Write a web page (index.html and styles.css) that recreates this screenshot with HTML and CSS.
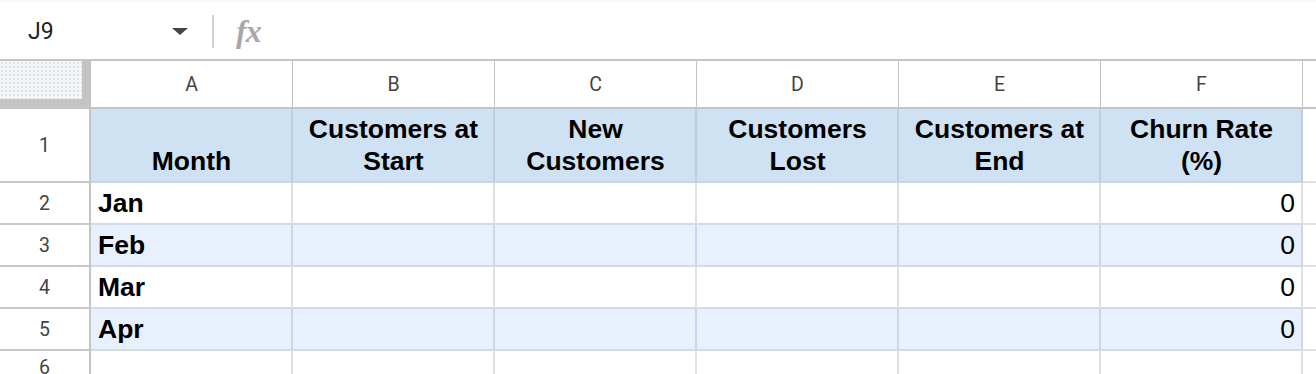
FILE: index.html
```html
<!DOCTYPE html>
<html lang="en">
<head>
  <meta charset="UTF-8">
  <meta name="viewport" content="width=device-width, initial-scale=1.0">
  <title>Churn Sheet</title>
  <link rel="stylesheet" href="styles.css">
</head>
<body>
  <div class="formula-bar">
    <div class="namebox">
      <span class="cell-ref">J9</span>
      <span class="drop"></span>
    </div>
    <div class="divider"></div>
    <span class="fx">fx</span>
  </div>

  <div class="sheet">
    <!-- column letters -->
    <div class="corner"><div class="corner-pane"></div></div>
    <div class="col-head">A</div>
    <div class="col-head">B</div>
    <div class="col-head">C</div>
    <div class="col-head">D</div>
    <div class="col-head">E</div>
    <div class="col-head">F</div>
    <div class="col-head col-rest"></div>

    <!-- row 1: titles -->
    <div class="row-head">1</div>
    <div class="cell title">Month</div>
    <div class="cell title">Customers at Start</div>
    <div class="cell title">New Customers</div>
    <div class="cell title">Customers Lost</div>
    <div class="cell title">Customers at End</div>
    <div class="cell title">Churn Rate (%)</div>
    <div class="cell rest"></div>

    <div class="row-head">2</div>
    <div class="cell month">Jan</div>
    <div class="cell"></div>
    <div class="cell"></div>
    <div class="cell"></div>
    <div class="cell"></div>
    <div class="cell num">0</div>
    <div class="cell rest"></div>

    <div class="row-head">3</div>
    <div class="cell band month">Feb</div>
    <div class="cell band"></div>
    <div class="cell band"></div>
    <div class="cell band"></div>
    <div class="cell band"></div>
    <div class="cell band num">0</div>
    <div class="cell rest"></div>

    <div class="row-head">4</div>
    <div class="cell month">Mar</div>
    <div class="cell"></div>
    <div class="cell"></div>
    <div class="cell"></div>
    <div class="cell"></div>
    <div class="cell num">0</div>
    <div class="cell rest"></div>

    <div class="row-head">5</div>
    <div class="cell band month">Apr</div>
    <div class="cell band"></div>
    <div class="cell band"></div>
    <div class="cell band"></div>
    <div class="cell band"></div>
    <div class="cell band num">0</div>
    <div class="cell rest"></div>

    <div class="row-head">6</div>
    <div class="cell"></div>
    <div class="cell"></div>
    <div class="cell"></div>
    <div class="cell"></div>
    <div class="cell"></div>
    <div class="cell"></div>
    <div class="cell rest"></div>
  </div>
</body>
</html>
```

FILE: styles.css
```css
body {
  margin: 0;
  background-color: #fff;
  font-family: "Liberation Sans", Arial, sans-serif;
  overflow: hidden;
}
.formula-bar {
  display: flex;
  align-items: center;
  height: 56px;
  border-top: 3px solid #f8fafd;
  padding-left: 28px;
}
.namebox {
  display: flex;
  align-items: center;
  justify-content: space-between;
  width: 160px;
}
.cell-ref {
  font-family: Roboto, sans-serif;
  font-size: 23px;
  color: #1f1f1f;
}
.drop {
  width: 0;
  height: 0;
  border-left: 8px solid transparent;
  border-right: 8px solid transparent;
  border-top: 7px solid #444;
}
.divider {
  width: 2px;
  height: 33px;
  margin-left: 24px;
  background-color: #d3d3d3;
}
.fx {
  margin-left: 22px;
  font-family: "Liberation Serif", serif;
  font-style: italic;
  font-weight: bold;
  font-size: 32px;
  color: #a8a8a8;
  letter-spacing: -1px;
}
.sheet {
  display: grid;
  grid-template-columns: 91px repeat(6, 202px) 1fr;
  grid-template-rows: 48px 74px repeat(4, 42px) 34px;
  border-top: 2px solid #c4c4c4;
}
.sheet > div {
  box-sizing: border-box;
}
.corner {
  background-color: #c4c4c4;
}
.corner-pane {
  width: 82px;
  height: 38px;
  background-color: #f5f6f7;
  background-image: radial-gradient(#dde0e4 0.7px, transparent 1px);
  background-size: 4px 4px;
}
.col-head {
  display: flex;
  align-items: center;
  justify-content: center;
  font-family: Roboto, sans-serif;
  font-size: 19.5px;
  color: #444;
  border-right: 1px solid #c4c4c4;
  border-bottom: 2px solid #c4c4c4;
}
.col-rest {
  border-right: none;
}
.row-head {
  display: flex;
  align-items: center;
  justify-content: center;
  font-family: Roboto, sans-serif;
  font-size: 19.5px;
  color: #444;
  border-right: 2px solid #c4c4c4;
  border-bottom: 2px solid #c8c8c8;
}
.cell {
  display: flex;
  align-items: flex-end;
  padding: 0 6px 4px 7px;
  font-size: 26.5px;
  line-height: 31.5px;
  color: #000;
  border-right: 2px solid #e1e1e1;
  border-bottom: 2px solid #d5dbe3;
}
.title {
  justify-content: center;
  text-align: center;
  font-weight: bold;
  background-color: #cfe2f3;
  border-right-color: #bfcedd;
  border-bottom-color: #c9d5e2;
}
.band {
  background-color: #e8f0fe;
  border-right-color: #cdd6e4;
}
.month {
  font-weight: bold;
}
.num {
  justify-content: flex-end;
}
.rest {
  border-right: none;
  border-bottom-color: #e1e1e1;
}
```
